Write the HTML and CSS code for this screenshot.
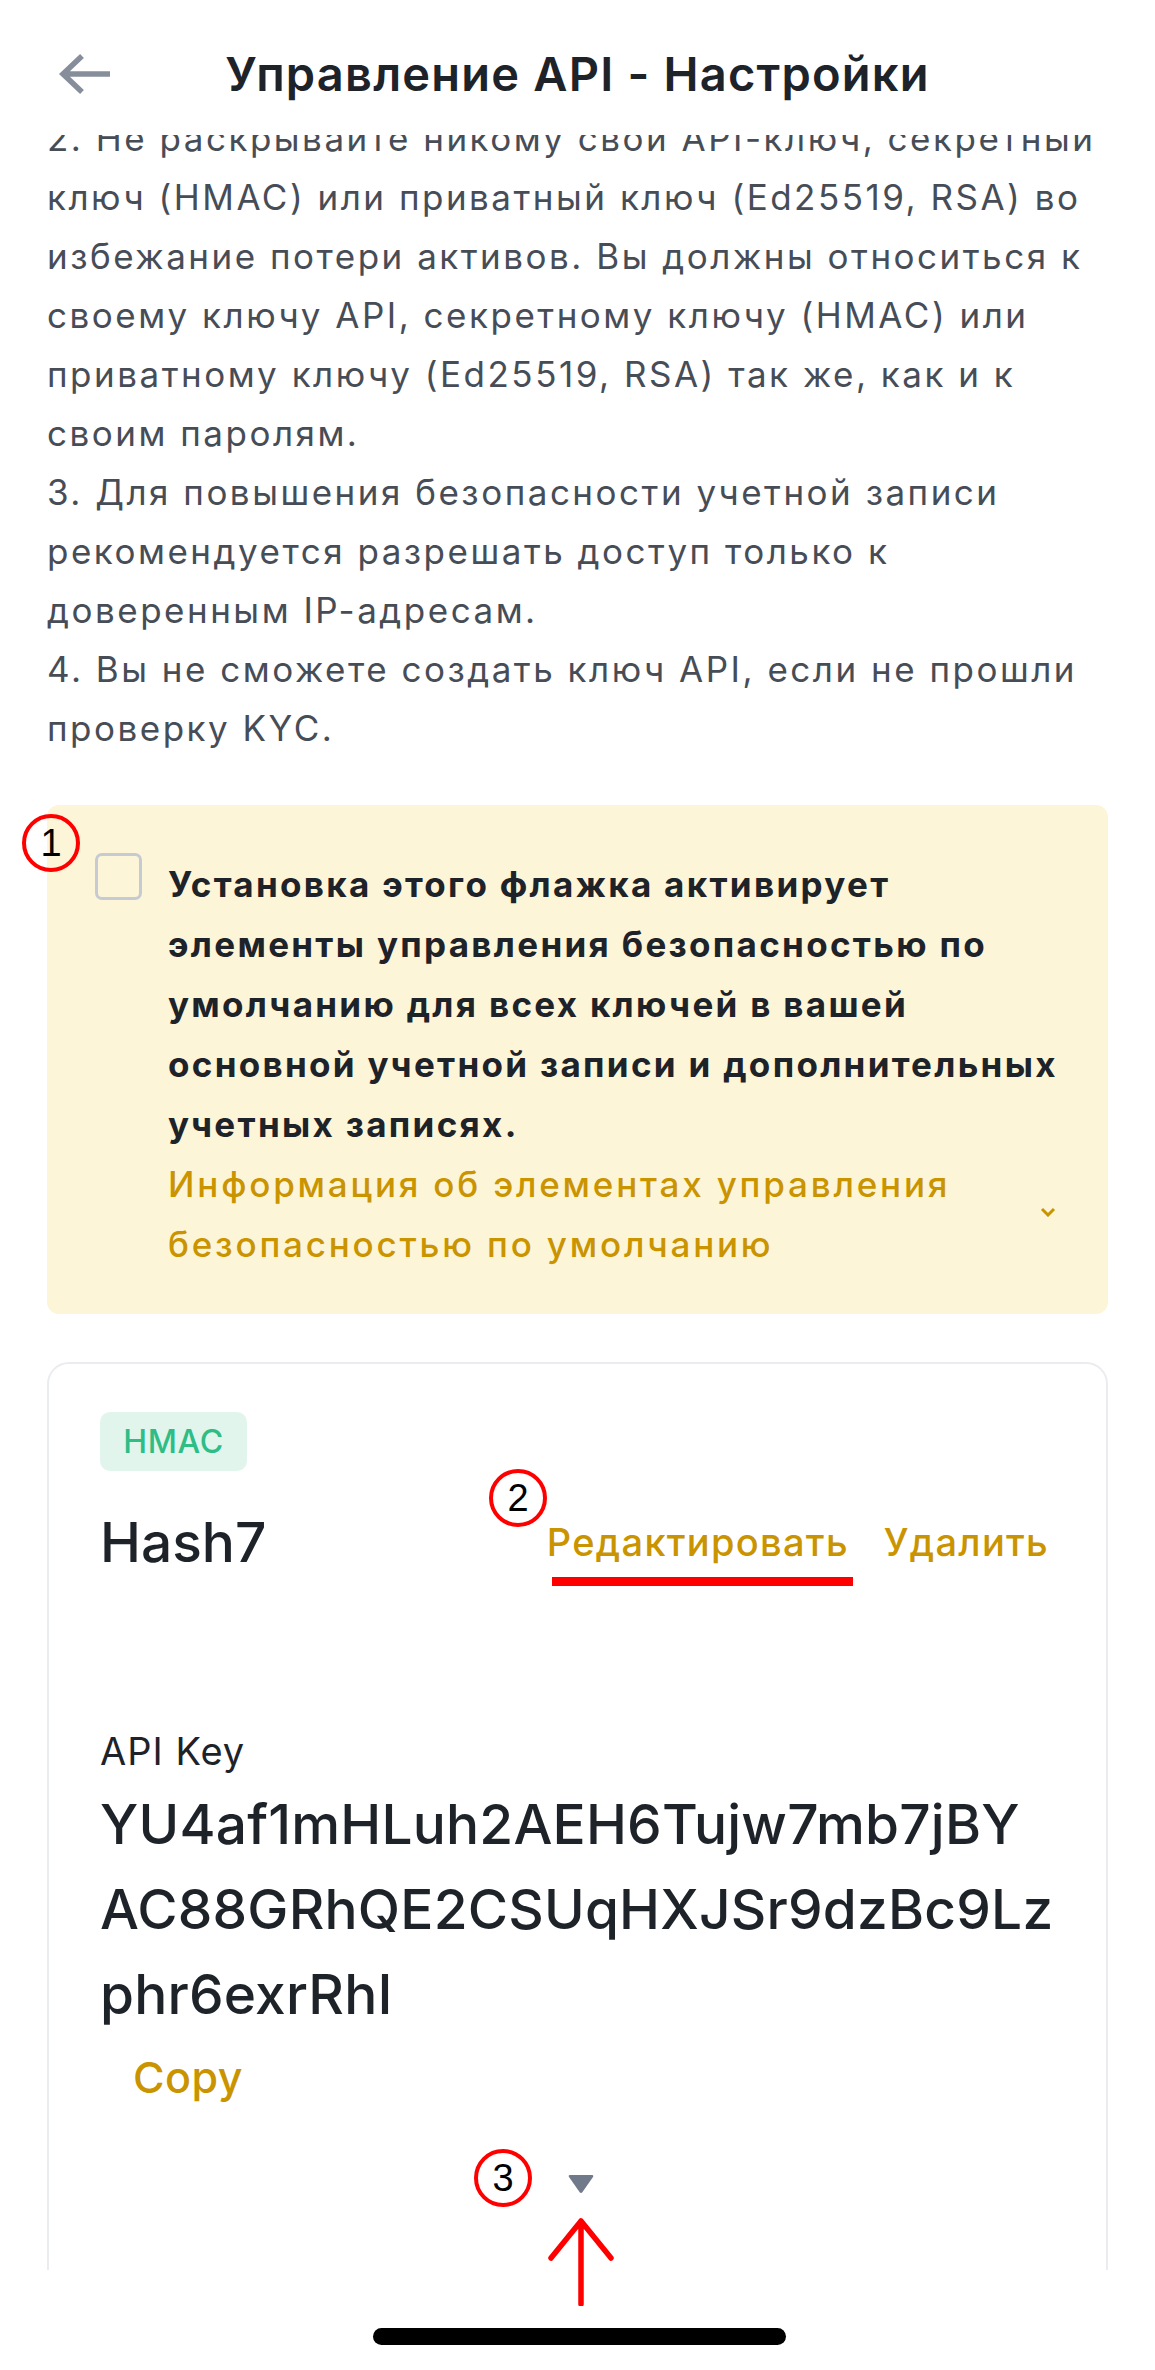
FILE: index.html
```html
<!DOCTYPE html>
<html lang="ru">
<head>
<meta charset="utf-8">
<title>Управление API - Настройки</title>
<link rel="stylesheet" href="styles.css">
</head>
<body>
<div class="screen">
  <header class="topbar">
    <button class="back" aria-label="Назад">
      <svg width="54" height="42" viewBox="0 0 54 42"><path d="M6 21H53M25 3L6 21L25 39" fill="none" stroke="#868e9b" stroke-width="5.5" stroke-linecap="butt" stroke-linejoin="miter"/></svg>
    </button>
    <h1 class="title">Управление API - Настройки</h1>
    <span class="spacer"></span>
  </header>

  <main class="scroll">
    <div class="notes">
      <p>2. Не раскрывайте никому свой API-ключ, секретный<br>ключ (HMAC) или приватный ключ (Ed25519, RSA) во<br>избежание потери активов. Вы должны относиться к<br>своему ключу API, секретному ключу (HMAC) или<br>приватному ключу (Ed25519, RSA) так же, как и к<br>своим паролям.</p>
      <p>3. Для повышения безопасности учетной записи<br>рекомендуется разрешать доступ только к<br>доверенным IP-адресам.</p>
      <p>4. Вы не сможете создать ключ API, если не прошли<br>проверку KYC.</p>
    </div>

    <section class="default-box">
      <span class="mark mark-1">1</span>
      <span class="checkbox"></span>
      <div class="default-text">
        <p class="default-title">Установка этого флажка активирует<br>элементы управления безопасностью по<br>умолчанию для всех ключей в вашей<br>основной учетной записи и дополнительных<br>учетных записях.</p>
        <div class="default-link">
          <span>Информация об элементах управления<br>безопасностью по умолчанию</span>
          <svg class="chev" width="16" height="10" viewBox="0 0 16 10"><path d="M2 2L8 8L14 2" fill="none" stroke="#c99400" stroke-width="3"/></svg>
        </div>
      </div>
    </section>

    <section class="key-card">
      <span class="badge">HMAC</span>
      <div class="name-row">
        <span class="key-name">Hash7</span>
        <div class="actions">
          <a class="action">Редактировать</a>
          <a class="action">Удалить</a>
        </div>
      </div>
      <div class="label">API Key</div>
      <div class="key-value">YU4af1mHLuh2AEH6Tujw7mb7jBY<br>AC88GRhQE2CSUqHXJSr9dzBc9Lz<br>phr6exrRhI</div>
      <a class="copy">Copy</a>
      <div class="expand"><svg width="26" height="18" viewBox="0 0 26 18"><path d="M2 0H24Q26 0 25 2L14.5 17Q13 19 11.5 17L1 2Q0 0 2 0Z" fill="#707a8a"/></svg></div>

      <span class="mark mark-2">2</span>
      <span class="underline-mark"></span>
      <span class="mark mark-3">3</span>
    </section>
  </main>

  <footer class="home">
    <span class="indicator"></span>
  </footer>

  <svg class="arrow-mark" width="68" height="90" viewBox="0 0 68 90"><path d="M34 5V88M4 42L34 5L64 42" fill="none" stroke="#ff0000" stroke-width="5.5" stroke-linejoin="round" stroke-linecap="round"/></svg>
</div>
</body>
</html>
```

FILE: styles.css
```css
* { box-sizing: border-box; }

html, body {
  margin: 0;
  padding: 0;
  background: #ffffff;
}

body {
  font-family: Inter, "Noto Sans", "Liberation Sans", sans-serif;
  color: #1e2329;
}

.screen {
  position: relative;
  width: 1155px;
  height: 2370px;
  display: flex;
  flex-direction: column;
  overflow: hidden;
}

/* Header */
.topbar {
  flex: 0 0 135px;
  display: grid;
  grid-template-columns: 1fr auto 1fr;
  align-items: start;
  padding: 44px 57px 0;
  background: #ffffff;
  position: relative;
  z-index: 2;
}

.back {
  justify-self: start;
  border: 0;
  background: none;
  padding: 0;
  margin-top: 9px;
  height: 42px;
  display: flex;
}

.title {
  margin: 0;
  font-size: 47px;
  font-weight: 600;
  line-height: 60px;
  color: #1e2329;
  letter-spacing: 1.2px;
}

/* Scroll area */
.scroll {
  flex: 1;
  overflow: hidden;
  padding: 0 47px;
  position: relative;
  z-index: 1;
}

.notes {
  margin-top: -26px;
  font-size: 35px;
  line-height: 59px;
  letter-spacing: 2.5px;
  color: #474d57;
  white-space: nowrap;
}

.notes p {
  margin: 0;
}

/* Default security controls box */
.default-box {
  position: relative;
  margin-top: 47px;
  background: #fdf5d8;
  border-radius: 12px;
  padding: 48px 48px 40px 48px;
  display: flex;
  gap: 26px;
  align-items: flex-start;
}

.checkbox {
  flex: 0 0 47px;
  width: 47px;
  height: 47px;
  border: 3px solid #c5cad3;
  border-radius: 7px;
  background: transparent;
}

.default-text {
  flex: 1;
  margin-top: 1px;
  white-space: nowrap;
}

.default-title {
  margin: 0;
  font-size: 35px;
  line-height: 60px;
  font-weight: 700;
  letter-spacing: 2.3px;
  color: #1e2329;
}

.default-link {
  display: flex;
  align-items: center;
  justify-content: space-between;
  gap: 20px;
  font-size: 35px;
  line-height: 60px;
  font-weight: 500;
  letter-spacing: 2.8px;
  color: #c99400;
}

.chev {
  flex: 0 0 auto;
  margin-right: 4px;
  margin-top: -4px;
}

/* Key card */
.key-card {
  position: relative;
  margin-top: 48px;
  border: 2px solid #eaecef;
  border-radius: 22px;
  padding: 48px 55px 200px 51px;
}

.badge {
  display: inline-flex;
  align-items: center;
  justify-content: center;
  width: 147px;
  height: 59px;
  border-radius: 10px;
  background: #e1f5ed;
  color: #2ebd85;
  font-size: 32px;
  font-weight: 500;
  letter-spacing: 0.6px;
}

.name-row {
  margin-top: 36px;
  height: 70px;
  display: flex;
  align-items: center;
  justify-content: space-between;
}

.key-name {
  font-size: 55px;
  font-weight: 500;
  color: #1e2329;
}

.actions {
  display: flex;
  gap: 35px;
  margin-right: 2px;
}

.action {
  font-size: 38px;
  font-weight: 500;
  letter-spacing: 1.3px;
  color: #c99400;
  text-decoration: none;
}

.label {
  margin-top: 150px;
  font-size: 38px;
  line-height: 48px;
  letter-spacing: 1px;
  color: #1e2329;
}

.key-value {
  margin-top: 7px;
  font-size: 55px;
  line-height: 85px;
  font-weight: 500;
  letter-spacing: 0.2px;
  color: #1e2329;
  white-space: nowrap;
}

.copy {
  display: inline-block;
  margin: 14px 0 0 33px;
  font-size: 43px;
  line-height: 52px;
  font-weight: 500;
  letter-spacing: 0.5px;
  color: #c99400;
}

.expand {
  margin-top: 72px;
  display: flex;
  justify-content: center;
  padding-left: 10px;
}

/* Annotation overlays */
.mark {
  position: absolute;
  width: 58px;
  height: 58px;
  border: 4px solid #ff0000;
  border-radius: 50%;
  display: flex;
  align-items: center;
  justify-content: center;
  font-family: "Liberation Sans", Arial, sans-serif;
  font-size: 38px;
  color: #000000;
  background: transparent;
}

.mark-1 { left: -25px; top: 9px; }
.mark-2 { left: 440px; top: 105px; }
.mark-3 { left: 425px; top: 785px; }

.underline-mark {
  position: absolute;
  left: 503px;
  top: 213px;
  width: 301px;
  height: 9px;
  background: #ff0000;
}

.arrow-mark {
  position: absolute;
  left: 547px;
  top: 2216px;
  z-index: 3;
}

/* Home indicator */
.home {
  flex: 0 0 100px;
  background: #ffffff;
  display: flex;
  justify-content: center;
  padding-top: 58px;
  position: relative;
  z-index: 2;
}

.indicator {
  width: 413px;
  height: 17px;
  border-radius: 9px;
  background: #000000;
  margin-left: 3px;
}
```
